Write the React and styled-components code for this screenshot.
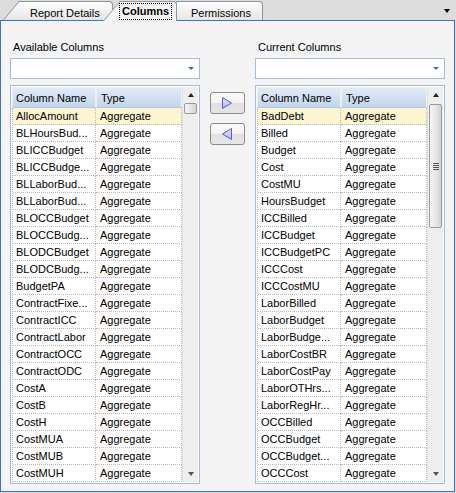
import React from "react";
import styled, { createGlobalStyle } from "styled-components";

const Global = createGlobalStyle`
  html, body { margin: 0; padding: 0; background: #dcdcdc; }
  body { font-family: "Liberation Sans", Arial, sans-serif; font-size: 11px; color: #000; }
  * { box-sizing: border-box; }
`;

const Window = styled.div`
  width: 456px;
  height: 493px;
  background: #dcdcdc;
  display: flex;
  flex-direction: column;
  overflow: hidden;
`;

const TabStrip = styled.div`
  position: relative;
  z-index: 2;
  height: 20px;
  display: flex;
  align-items: flex-end;
  padding-left: 19px;
`;

const Tab = styled.div`
  position: relative;
  z-index: ${(p) => (p.$active ? 3 : 1)};
  width: ${(p) => p.$w}px;
  margin-left: ${(p) => p.$ml || 0}px;
  height: ${(p) => (p.$active ? 20 : 19)}px;
  margin-bottom: ${(p) => (p.$active ? -1 : 0)}px;
  border-top: 1px solid #8f9699;
  border-right: 1px solid #8f9699;
  border-top-right-radius: 4px;
  background: ${(p) => (p.$active ? "#f4f4f4" : "linear-gradient(#fdfdfd, #e6e6e6)")};
  display: flex;
  align-items: flex-start;
  padding-top: ${(p) => (p.$active ? 1 : 3)}px;
  padding-left: ${(p) => p.$pl}px;
  font-weight: ${(p) => (p.$active ? 700 : 400)};
  white-space: nowrap;
  &::before {
    content: "";
    position: absolute;
    z-index: -1;
    top: -1px;
    bottom: 0;
    left: -16px;
    width: 22px;
    background: inherit;
    border-left: 1px solid #8f9699;
    border-top: 1px solid #8f9699;
    transform: skewX(-40deg);
    transform-origin: bottom left;
  }
`;

const TabLabel = styled.span`
  position: relative;
  line-height: 13px;
  padding: 1px 2px;
  border: 1px ${(p) => (p.$focus ? "dotted #000" : "solid transparent")};
`;

const StripArrow = styled.div`
  position: absolute;
  right: 6px;
  top: 9px;
  width: 0;
  height: 0;
  border-left: 3.5px solid transparent;
  border-right: 3.5px solid transparent;
  border-top: 4px solid #000;
`;

const Panel = styled.div`
  width: 455px;
  height: 472px;
  border: 1px solid #3a72cf;
  background: #f4f4f4;
  display: flex;
  padding: 20px 9px 0 9px;
`;

const Column = styled.div`
  width: 190px;
  display: flex;
  flex-direction: column;
`;

const Label = styled.div`
  line-height: 13px;
  padding-left: 3px;
  margin-bottom: 4px;
`;

const Combo = styled.div`
  height: 21px;
  border: 1px solid #a6bbd5;
  background: #fff;
  display: flex;
  justify-content: flex-end;
  align-items: center;
  padding-right: 5px;
  margin-bottom: 6px;
`;

const ComboArrow = styled.span`
  width: 0;
  height: 0;
  border-left: 3px solid transparent;
  border-right: 3px solid transparent;
  border-top: 3px solid #4e6a93;
`;

const ListBox = styled.div`
  height: 399px;
  border: 1px solid #a6bbd5;
  background: #fff;
  padding: 1px;
  display: flex;
`;

const TableArea = styled.div`
  width: 170px;
  display: flex;
  flex-direction: column;
`;

const HeaderRow = styled.div`
  display: grid;
  grid-template-columns: 84px 86px;
  height: 21px;
`;

const HeaderCell = styled.div`
  background: linear-gradient(#e2ebf7, #c3d5ec);
  border: 1px solid #e9f0f9;
  border-bottom-color: #b3c8e2;
  display: flex;
  align-items: center;
  padding-left: ${(p) => p.$pl}px;
  white-space: nowrap;
`;

const Body = styled.div`
  border-left: 1px dotted #b9b9b9;
  display: flex;
  flex-direction: column;
`;

const Row = styled.div`
  display: grid;
  grid-template-columns: 83px 86px;
  height: 17px;
  background: ${(p) => (p.$selected ? "#fdf5d2" : "#fff")};
`;

const Cell = styled.div`
  border-right: 1px dotted #b9b9b9;
  border-bottom: 1px dotted #b9b9b9;
  padding-left: ${(p) => p.$pl}px;
  line-height: 16px;
  white-space: nowrap;
  overflow: hidden;
`;

const ScrollBar = styled.div`
  width: 16px;
  background: #eeeeee;
  border-left: 1px solid #e2e2e2;
  display: flex;
  flex-direction: column;
`;

const ScrollButton = styled.div`
  height: 16px;
  display: flex;
  align-items: center;
  justify-content: center;
`;

const ArrowGlyph = styled.span`
  width: 0;
  height: 0;
  border-left: 3.5px solid transparent;
  border-right: 3.5px solid transparent;
  ${(p) => (p.$up ? "border-bottom: 4px solid #222;" : "border-top: 4px solid #555;")}
`;

const Track = styled.div`
  flex: 1;
  padding: 0 1px;
`;

const Thumb = styled.div`
  height: ${(p) => p.$h}px;
  margin-top: ${(p) => p.$top}px;
  border: 1px solid #9a9a9a;
  border-radius: 2px;
  background: linear-gradient(90deg, #f6f6f6, #e4e4e4 60%, #d2d2d2);
  display: flex;
  align-items: center;
  justify-content: center;
`;

const Grip = styled.div`
  width: 6px;
  height: 7px;
  background: repeating-linear-gradient(#555 0 1px, transparent 1px 2px);
`;

const Middle = styled.div`
  flex: 1;
  display: flex;
  flex-direction: column;
  align-items: center;
  gap: 9px;
  padding-top: 51px;
  padding-right: 1px;
`;

const MoveButton = styled.div`
  width: 35px;
  height: 22px;
  border: 1px solid #8a8a8a;
  border-radius: 3px;
  background: linear-gradient(#fbfbfb 0%, #f2f2f2 48%, #e1e1e1 52%, #e6e6e6 100%);
  display: flex;
  align-items: center;
  justify-content: center;
`;

const Triangle = ({ dir }) => (
  <svg width="12" height="14" viewBox="0 0 12 14">
    <defs>
      <linearGradient id={`tg${dir}`} x1="0" y1="0" x2="0" y2="1">
        <stop offset="0" stopColor="#e4e4fd" />
        <stop offset="1" stopColor="#b4b4f4" />
      </linearGradient>
    </defs>
    <polygon
      points={dir === "right" ? "1.5,1.5 10.5,7 1.5,12.5" : "10.5,1.5 1.5,7 10.5,12.5"}
      fill={`url(#tg${dir})`}
      stroke="#5a5ad8"
      strokeWidth="1"
      strokeLinejoin="round"
    />
  </svg>
);

const left = [
  "AllocAmount", "BLHoursBud...", "BLICCBudget", "BLICCBudge...", "BLLaborBud...",
  "BLLaborBud...", "BLOCCBudget", "BLOCCBudg...", "BLODCBudget", "BLODCBudg...",
  "BudgetPA", "ContractFixe...", "ContractICC", "ContractLabor", "ContractOCC",
  "ContractODC", "CostA", "CostB", "CostH", "CostMUA", "CostMUB", "CostMUH",
];

const right = [
  "BadDebt", "Billed", "Budget", "Cost", "CostMU", "HoursBudget", "ICCBilled",
  "ICCBudget", "ICCBudgetPC", "ICCCost", "ICCCostMU", "LaborBilled", "LaborBudget",
  "LaborBudge...", "LaborCostBR", "LaborCostPay", "LaborOTHrs...", "LaborRegHr...",
  "OCCBilled", "OCCBudget", "OCCBudget...", "OCCCost",
];

const ColumnList = ({ title, items, thumbTop, thumbH, grip }) => (
  <Column>
    <Label>{title}</Label>
    <Combo>
      <ComboArrow />
    </Combo>
    <ListBox>
      <TableArea>
        <HeaderRow>
          <HeaderCell $pl={3}>Column Name</HeaderCell>
          <HeaderCell $pl={4}>Type</HeaderCell>
        </HeaderRow>
        <Body>
          {items.map((name, i) => (
            <Row key={i} $selected={i === 0}>
              <Cell $pl={3}>{name}</Cell>
              <Cell $pl={4}>Aggregate</Cell>
            </Row>
          ))}
        </Body>
      </TableArea>
      <ScrollBar>
        <ScrollButton>
          <ArrowGlyph $up />
        </ScrollButton>
        <Track>
          <Thumb $top={thumbTop} $h={thumbH}>{grip && <Grip />}</Thumb>
        </Track>
        <ScrollButton>
          <ArrowGlyph />
        </ScrollButton>
      </ScrollBar>
    </ListBox>
  </Column>
);

export default function App() {
  return (
    <>
      <Global />
      <Window>
        <TabStrip>
          <Tab $w={94} $pl={8}>
            <TabLabel>Report Details</TabLabel>
          </Tab>
          <Tab $w={58} $ml={6} $pl={0} $active>
            <TabLabel $focus>Columns</TabLabel>
          </Tab>
          <Tab $w={86} $pl={11}>
            <TabLabel>Permissions</TabLabel>
          </Tab>
          <StripArrow />
        </TabStrip>
        <Panel>
          <ColumnList title="Available Columns" items={left} thumbTop={0} thumbH={11} />
          <Middle>
            <MoveButton>
              <Triangle dir="right" />
            </MoveButton>
            <MoveButton>
              <Triangle dir="left" />
            </MoveButton>
          </Middle>
          <ColumnList title="Current Columns" items={right} thumbTop={1} thumbH={124} grip />
        </Panel>
      </Window>
    </>
  );
}
